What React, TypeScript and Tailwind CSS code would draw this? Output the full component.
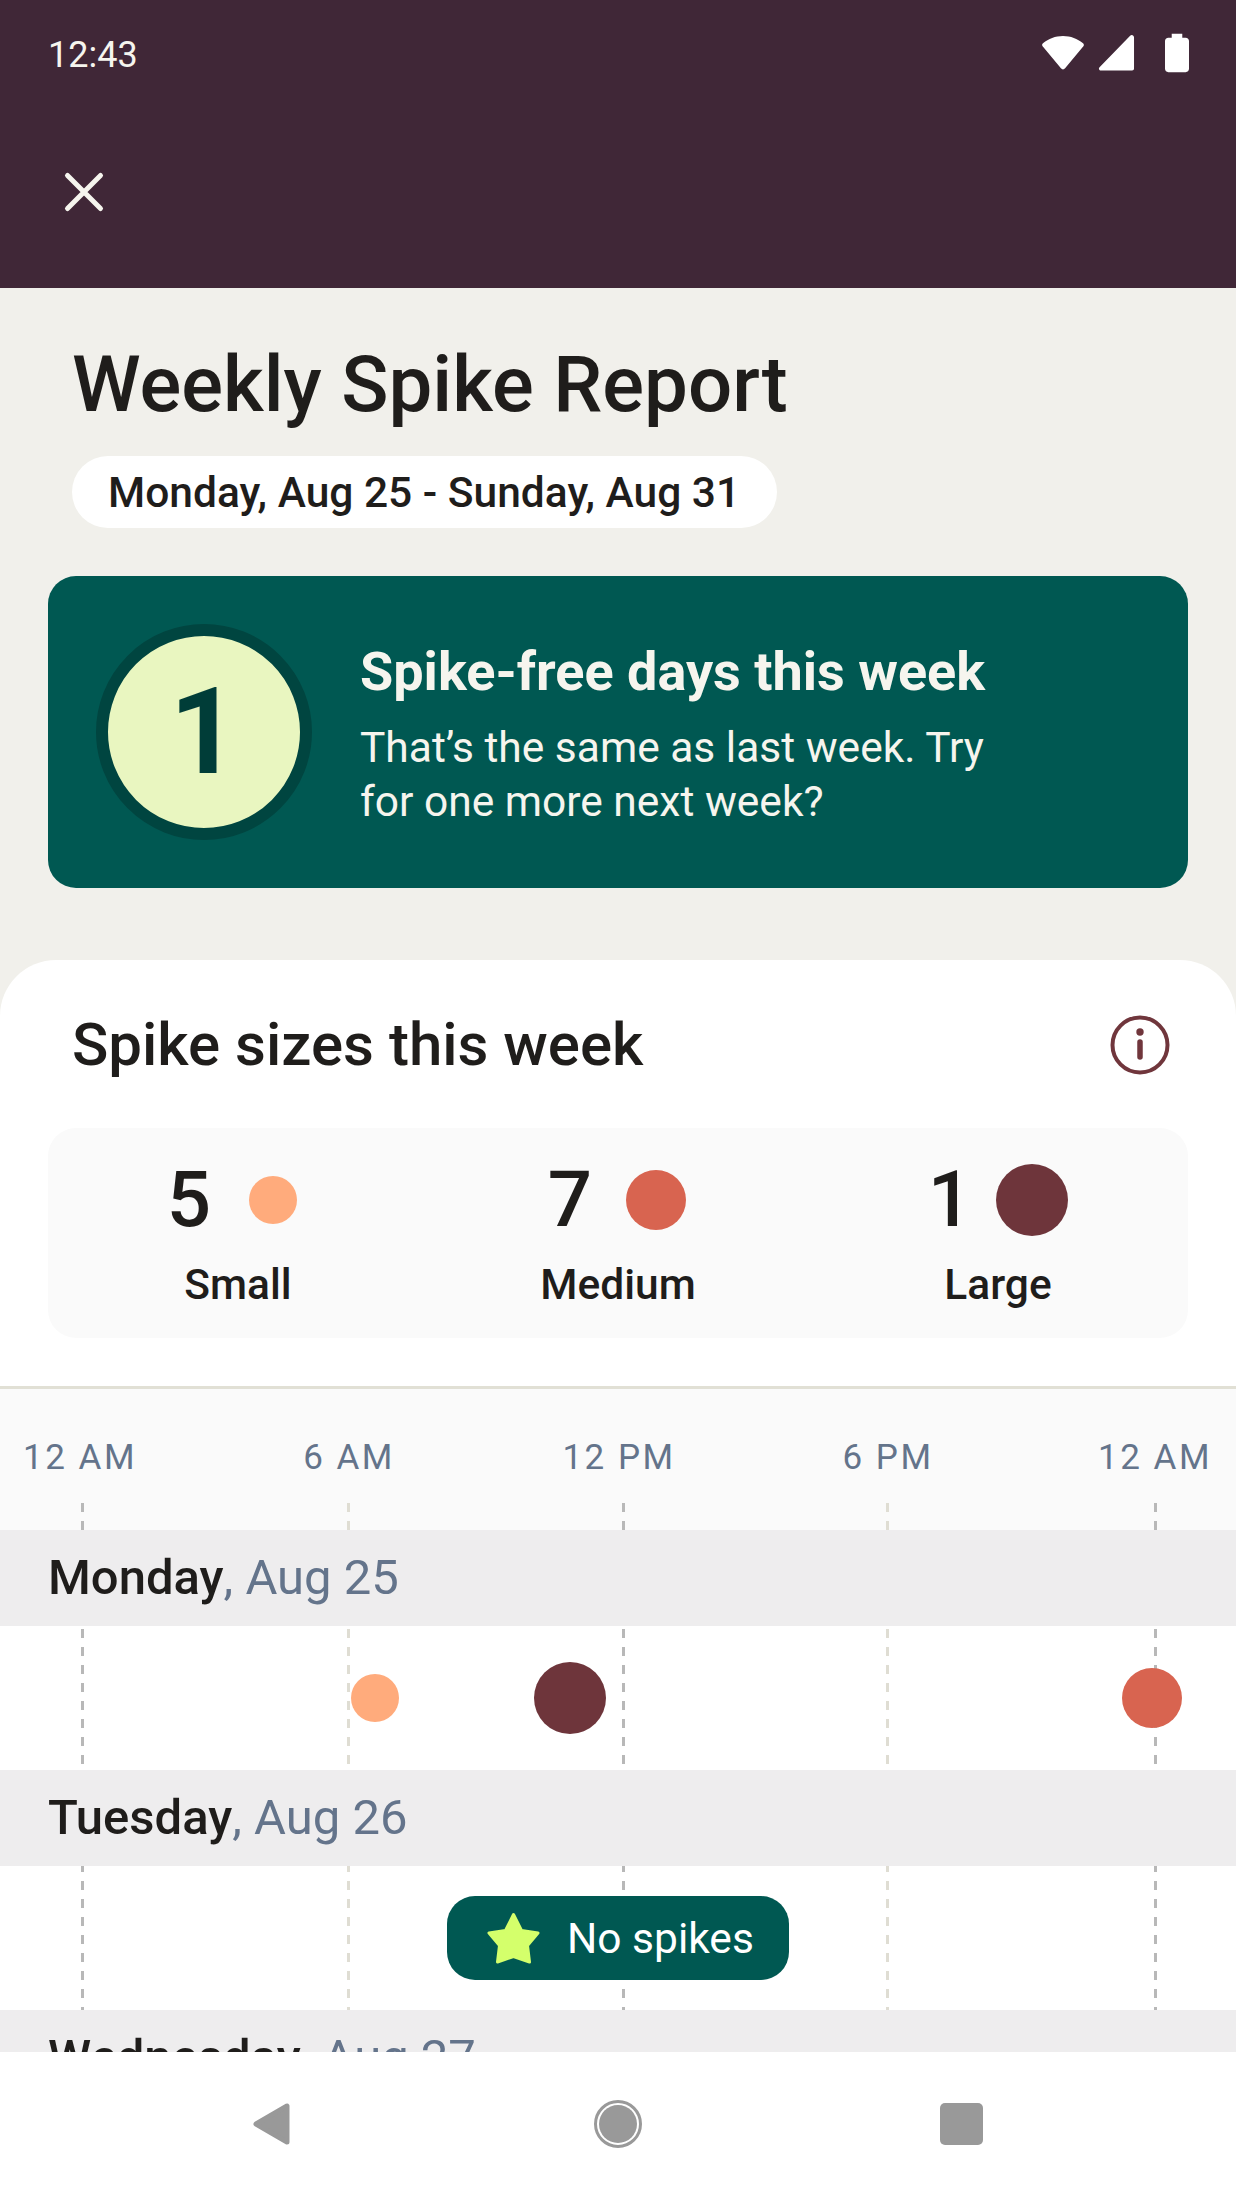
import React from "react";

const DARK = "bg-[repeating-linear-gradient(to_bottom,#b8b8b8_0,#b8b8b8_9px,transparent_9px,transparent_18px)]";
const LIGHT = "bg-[repeating-linear-gradient(to_bottom,#dfddd3_0,#dfddd3_9px,transparent_9px,transparent_18px)]";

function Guides() {
  const base = "absolute bottom-0 top-[114px] w-[3px] ";
  return (
    <>
      <div className={base + "left-[81px] " + DARK} />
      <div className={base + "left-[347px] " + LIGHT} />
      <div className={base + "left-[622px] " + DARK} />
      <div className={base + "left-[886px] " + LIGHT} />
      <div className={base + "left-[1154px] " + DARK} />
    </>
  );
}

function DayHeader({ day, date }: { day: string; date: string }) {
  return (
    <div className="relative h-[96px] shrink-0 bg-[#eeedee] pl-[48px] flex items-center text-[49px] leading-[96px]">
      <span className="font-medium text-[#1f1d1b]">{day}</span>
      <span className="text-[#64748b] whitespace-pre">, {date}</span>
    </div>
  );
}

function Stat({ n, label, dot, nw }: { n: string; label: string; dot: string; nw: string }) {
  return (
    <div className="flex flex-col items-center">
      <div className={`h-[72px] flex items-center ${nw}`}>
        <span className="text-[78px] leading-[72px] font-medium text-[#1f1d1b]">{n}</span>
        <span className={dot} />
      </div>
      <div className="mt-[19px] text-[42.5px] leading-[60px] font-medium text-[#1f1d1b]">{label}</div>
    </div>
  );
}

export default function App() {
  return (
    <div className="w-[1236px] h-[2196px] overflow-hidden flex flex-col bg-white font-['Roboto',sans-serif]">
      <header className="h-[288px] shrink-0 bg-[#402737] flex flex-col">
        <div className="h-[106px] pl-[48px] pr-[47px] flex items-center justify-between">
          <span className="mt-[4px] text-[36px] leading-[42px] text-[#f6f5ee]">12:43</span>
          <div className="flex items-center gap-[13px]">
            <svg width="44" height="36" viewBox="0 0 44 38" fill="#fff">
              <path d="M0 10.500C0 9.500 .5 9 1.200 8.400 6.500 4 14 1 22 1s15.500 3 20.800 7.400c.8.6 1.200 1.100 1.200 2.100 0 .7-.3 1.200-.7 1.700L24.200 35.200c-1.200 1.500-3.200 1.500-4.400 0L.7 12.200c-.4-.5-.7-1-.7-1.700z" />
            </svg>
            <svg width="37" height="38" viewBox="0 0 38 38" fill="#fff">
              <path d="M33 1.200c1.600-1.400 4-.4 4 1.800v32c0 1.200-.8 2-2 2H3c-1.800 0-2.700-2.200-1.400-3.400z" />
            </svg>
            <svg width="24" height="40" viewBox="0 0 25 40" fill="#fff" className="ml-[17px]">
              <path d="M7 0h11v4h3.500C23.500 4 25 5.500 25 7.500V36.500C25 38.500 23.500 40 21.500 40h-18C1.500 40 0 38.500 0 36.500V7.500C0 5.500 1.500 4 3.500 4H7z" />
            </svg>
          </div>
        </div>
        <div className="pl-[63px] pt-[65px]">
          <svg width="42" height="42" viewBox="0 0 42 42" fill="none" stroke="#f6f5ee" strokeWidth="5" strokeLinecap="round">
            <path d="M4.500 4.500l33 33M37.500 4.500l-33 33" />
          </svg>
        </div>
      </header>

      <main className="flex-1 min-h-0 overflow-hidden bg-[#f1f0eb] flex flex-col">
        <div className="pl-[72px] pt-[50px]">
          <h1 className="text-[78px] leading-[94px] font-medium text-[#1f1d1b]">Weekly Spike Report</h1>
          <div className="mt-[24px] inline-flex h-[72px] items-center rounded-full bg-white pl-[36px] pr-[37px] pt-[1px] text-[42.5px] font-medium text-[#1f1d1b]">
            Monday, Aug 25 - Sunday, Aug 31
          </div>
        </div>

        <section className="mx-[48px] mt-[48px] h-[312px] shrink-0 rounded-[28px] bg-[#005852] flex items-center pl-[48px]">
          <div className="w-[216px] h-[216px] shrink-0 rounded-full border-[12px] border-[#004540] bg-[#e9f6c0] flex items-center justify-center text-[120px] font-bold text-[#003d38] leading-none">
            1
          </div>
          <div className="ml-[48px] w-[720px] pt-[5px]">
            <div className="text-[54px] leading-[64px] font-bold text-[#f6f5ee]">Spike-free days this week</div>
            <div className="mt-[17px] text-[42.5px] leading-[54px] text-[#f6f5ee]">
              That’s the same as last week. Try
              <br />
              for one more next week?
            </div>
          </div>
        </section>

        <section className="mt-[72px] flex-1 min-h-0 rounded-t-[56px] bg-white flex flex-col">
          <div className="h-[168px] shrink-0 pl-[72px] pr-[66px] pt-[2px] flex items-center justify-between">
            <h2 className="text-[60px] leading-[76px] font-medium text-[#1f1d1b]">Spike sizes this week</h2>
            <svg width="60" height="60" viewBox="0 0 60 60" fill="none" stroke="#70363c" strokeWidth="4">
              <circle cx="30" cy="30" r="27.500" />
              <path d="M30 27v15" strokeWidth="5.500" strokeLinecap="round" />
              <circle cx="30" cy="17" r="3.700" fill="#70363c" stroke="none" />
            </svg>
          </div>

          <div className="mx-[48px] h-[210px] shrink-0 rounded-[28px] bg-[#fafafa] grid grid-cols-3 pt-[36px]">
            <Stat n="5" label="Small" nw="gap-[38px] pr-[12px]" dot="w-[48px] h-[48px] rounded-full bg-[#ffab7c]" />
            <Stat n="7" label="Medium" nw="gap-[34px] pr-[2px]" dot="w-[60px] h-[60px] rounded-full bg-[#d86450]" />
            <Stat n="1" label="Large" nw="gap-[24px]" dot="w-[72px] h-[72px] rounded-full bg-[#6e353b]" />
          </div>

          <div className="relative mt-[48px] flex-1 min-h-0 border-t-[3px] border-[#e1e0d5] flex flex-col overflow-hidden bg-white">
            <div className="h-[141px] shrink-0 bg-[#fafafa]">
              <div className="flex ml-[-54px] pt-[48px] text-[35px] leading-[42px] tracking-[2.5px] text-[#64748b]">
                <span className="w-[268px] shrink-0 text-center">12 AM</span>
                <span className="w-[270px] shrink-0 text-center">6 AM</span>
                <span className="w-[270px] shrink-0 text-center">12 PM</span>
                <span className="w-[268px] shrink-0 text-center">6 PM</span>
                <span className="w-[266px] shrink-0 text-center">12 AM</span>
              </div>
            </div>
            <Guides />

            <DayHeader day="Monday" date="Aug 25" />
            <div className="relative h-[144px] shrink-0">
              <span className="absolute left-[351px] top-[48px] w-[48px] h-[48px] rounded-full bg-[#ffab7c]" />
              <span className="absolute left-[534px] top-[36px] w-[72px] h-[72px] rounded-full bg-[#6e353b]" />
              <span className="absolute left-[1122px] top-[42px] w-[60px] h-[60px] rounded-full bg-[#d86450]" />
            </div>

            <DayHeader day="Tuesday" date="Aug 26" />
            <div className="relative h-[144px] shrink-0 pl-[447px] flex items-center">
              <div className="w-[342px] h-[84px] rounded-[28px] bg-[#005852] flex items-center pl-[40px] gap-[27px]">
                <svg width="53" height="52" viewBox="0 0 53 52" fill="#d4ff6b" stroke="#d4ff6b" strokeWidth="3" strokeLinejoin="round">
                  <path d="M26.500 2.500L34.500 18.500L51 21L40.500 33.500L42.500 50L26.500 44.500L10.500 50L12.500 33.500L2 21L18.500 18.500Z" />
                </svg>
                <span className="pt-[1px] text-[42.5px] leading-[54px] text-white">No spikes</span>
              </div>
            </div>

            <DayHeader day="Wednesday" date="Aug 27" />
          </div>
        </section>
      </main>

      <nav className="relative h-[144px] shrink-0 bg-white flex items-center pl-[253px]">
        <svg width="37" height="42" viewBox="0 0 37 42" fill="#999" stroke="#999" strokeWidth="5" strokeLinejoin="round">
          <path d="M34 3L34 39L3 21Z" />
        </svg>
        <div className="ml-[304px] w-[48px] h-[48px] rounded-full border-[3px] border-[#999] p-[2px]">
          <div className="w-full h-full rounded-full bg-[#999]" />
        </div>
        <div className="ml-[298px] w-[43px] h-[42px] rounded-[5px] bg-[#999]" />
      </nav>
    </div>
  );
}
